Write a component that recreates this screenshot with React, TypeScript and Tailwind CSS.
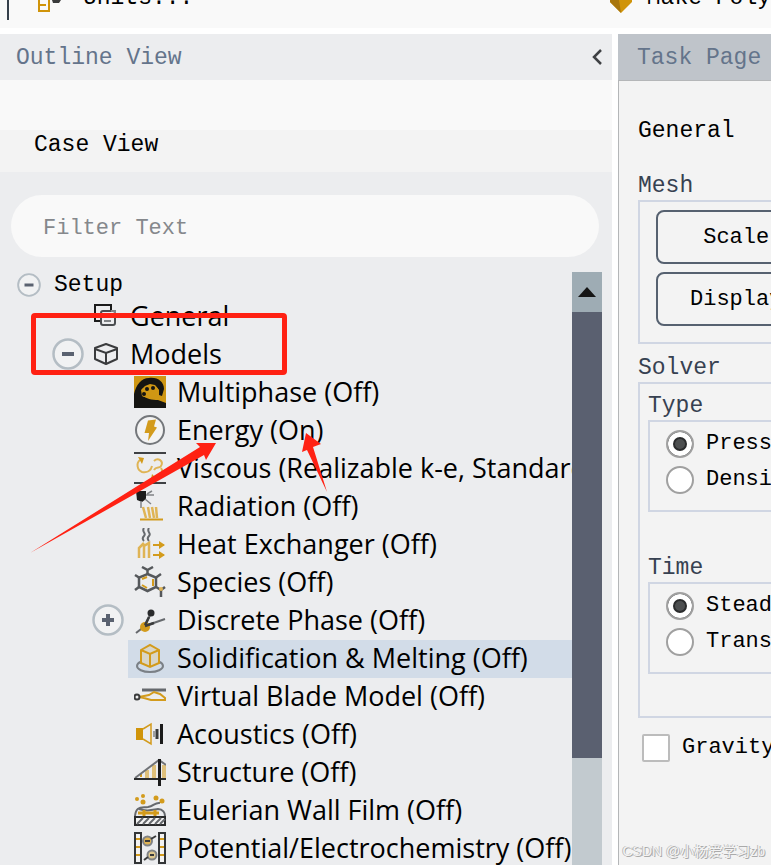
import { useState, type ReactNode } from 'react';

const GOLD = '#d39b1c';
const INK = '#1b1b1b';
const GRAY = '#66696d';

const MultiphaseIcon = () => (
  <svg viewBox="0 0 32 32" className="size-8 shrink-0" aria-hidden="true">
    <rect width="32" height="32" fill="#cf9714" />
    <path d="M0 32V18C2 9 7 2 15 2C24 1 30 6 30 13L28 20L25 19L25 15C23 9 18 8 14 10L8 13L8 19C12 23 18 24 24 24L32 27V32Z" fill="#151512" />
    <path d="M8 20L7 14L11 10L16 8L21 9L25 14L25 19L21 17L18 15L13 16L14 20L10 21Z" fill="#cf9714" />
    <g fill="#151512">
      <circle cx="13" cy="13" r="2" />
      <circle cx="19" cy="12" r="2" />
      <circle cx="10" cy="18" r="2" />
    </g>
  </svg>
);

const EnergyIcon = () => (
  <svg viewBox="0 0 32 32" className="size-8 shrink-0" aria-hidden="true">
    <circle cx="16" cy="16" r="14" fill="#f3f3f3" stroke="#74777b" strokeWidth="2" />
    <path d="M14 6.5L22 5.5L20 12.5L23 13.5L14 27L15 19H10.5Z" fill={GOLD} />
  </svg>
);

const ViscousIcon = () => (
  <svg viewBox="0 0 32 32" className="size-8 shrink-0" fill="none" aria-hidden="true">
    <path d="M0 1H32M0 31H32" stroke="#3f4144" strokeWidth="2" />
    <g stroke="#dfb455" strokeWidth="2">
      <path d="M6 8C2 11 3 18 8 20C13 21 17 19 18 14" />
      <path d="M20 9C24 5 30 9 27 14C26 17 22 14 20 18" />
      <path d="M27 16C31 22 24 26 18 25" />
    </g>
    <path d="M4 5L10 6L8 12ZM18 22L23 27H17Z" fill={GOLD} />
  </svg>
);

const RadiationIcon = () => (
  <svg viewBox="0 0 32 32" className="size-8 shrink-0" fill="none" aria-hidden="true">
    <path d="M2 1H12V9L8 12L3 10Z" fill={INK} />
    <path d="M12 5H20M11 9L17 14M7 11V18M13 4L18 1" stroke="#808386" strokeWidth="1.5" />
    <path d="M6 29.5H29" stroke={GOLD} strokeWidth="2" />
    <path d="M9 17L12 28M14 17L16 28M18 17L20 28M22 17L23 28" stroke="#dfb455" strokeWidth="2.5" />
  </svg>
);

const HeatIcon = () => (
  <svg viewBox="0 0 32 32" className="size-8 shrink-0" fill="none" aria-hidden="true">
    <path d="M10 0C7 4 13 5 10 8C8 10 9 12 10 13M15 0C12 4 18 5 15 8C13 10 14 12 15 13" stroke={GRAY} strokeWidth="2" />
    <path d="M5 30V20L10 15M10 30V18L15 15V30" stroke="#dfb455" strokeWidth="2.5" />
    <path d="M19 17H30M19 27H30" stroke={GOLD} strokeWidth="2" />
    <path d="M25 13L31 17L25 21ZM25 23L31 27L25 31Z" fill={GOLD} />
  </svg>
);

const SpeciesIcon = () => (
  <svg viewBox="0 0 32 32" className="size-8 shrink-0" fill="none" aria-hidden="true">
    <path d="M13.5 8L22 11.5V21L13.5 25L5 21V11.5Z" stroke="#55585b" strokeWidth="2.5" />
    <path d="M13.5 8V4L8 1M13.5 4L19 1M5 11.5L1 9M5 21L1 24M22 11.5L27 8M22 21L27 24V31M27 24L31 21" stroke="#55585b" strokeWidth="2.5" />
    <path d="M8 13L13 11M19 13V20M8 19L13 22" stroke={GOLD} strokeWidth="2" />
    <circle cx="27" cy="23" r="2" fill="#dfb455" />
  </svg>
);

const DiscreteIcon = () => (
  <svg viewBox="0 0 32 32" className="size-8 shrink-0" fill="none" aria-hidden="true">
    <path d="M2 29L11 22L31 15M11 22L17 9" stroke={GRAY} strokeWidth="2" />
    <circle cx="11" cy="23" r="5" fill={GOLD} />
    <circle cx="17" cy="9" r="3.5" fill="#2a2b2c" />
    <path d="M11 22L20 19M11 21L15 13" stroke="#3a3b3c" strokeWidth="2.5" />
  </svg>
);

const SolidificationIcon = () => (
  <svg viewBox="0 0 32 32" className="size-8 shrink-0" fill="none" aria-hidden="true">
    <ellipse cx="16" cy="24" rx="13" ry="6" stroke="#7b8086" strokeWidth="2" />
    <path d="M7 8L16 3L25 8V21L16 25L7 21Z" fill="#d9d6c8" stroke={GOLD} strokeWidth="2" />
    <path d="M7 8L16 12L25 8M16 12V25" stroke={GOLD} strokeWidth="2" />
  </svg>
);

const BladeIcon = () => (
  <svg viewBox="0 0 32 32" className="size-8 shrink-0" fill="none" aria-hidden="true">
    <path d="M8 10H32" stroke={GRAY} strokeWidth="3" />
    <path d="M5 17L15 15L20 12L26 14L31 18V20H17L10 18Z" stroke={GOLD} strokeWidth="2" />
    <circle cx="3" cy="17" r="2.5" stroke="#3a3b3c" strokeWidth="2" />
  </svg>
);

const AcousticsIcon = () => (
  <svg viewBox="0 0 32 32" className="size-8 shrink-0" fill="none" aria-hidden="true">
    <rect x="2" y="10" width="7" height="12" fill="#d0940a" />
    <path d="M9 11L17 6V26L9 21" stroke={GOLD} strokeWidth="1.5" />
    <path d="M20 13V19" stroke="#9c9ea1" strokeWidth="2" />
    <path d="M23 11V21" stroke="#3a3b3c" strokeWidth="3" />
    <path d="M27.5 6V26" stroke={INK} strokeWidth="3" />
  </svg>
);

const StructureIcon = () => (
  <svg viewBox="0 0 32 32" className="size-8 shrink-0" fill="none" aria-hidden="true">
    <path d="M13 22V14M20 22V9M30 22V9" stroke="#dfc07a" strokeWidth="4" />
    <path d="M7 21V18" stroke={GOLD} strokeWidth="2" />
    <path d="M1 22L25 4L32 9" stroke="#707377" strokeWidth="2" />
    <path d="M0 23H32" stroke="#2a2b2c" strokeWidth="2" />
    <path d="M25.5 3V30" stroke={INK} strokeWidth="3" />
  </svg>
);

const WallFilmIcon = () => (
  <svg viewBox="0 0 32 32" className="size-8 shrink-0" fill="none" aria-hidden="true">
    <rect x="1" y="23" width="30" height="8" fill="#f3f3f3" stroke="#2a2b2c" strokeWidth="2" />
    <path d="M3 30L9 24M9 30L15 24M15 30L21 24M21 30L27 24M26 30L31 25" stroke={GRAY} strokeWidth="2" />
    <path d="M1 22C2 12 7 14 14 13C20 12 21 8 26 9M5 15C13 18 18 16 24 15C29 15 31 19 31 22" stroke={GRAY} strokeWidth="2" />
    <path d="M4 19H25M10 16V22M21 16V22" stroke={GOLD} strokeWidth="3" />
    <g fill={GOLD}>
      <circle cx="3" cy="5" r="2" />
      <circle cx="9" cy="2" r="2" />
      <circle cx="9" cy="8" r="2.5" />
      <circle cx="22" cy="4" r="2.5" />
      <circle cx="28" cy="7" r="2.5" />
    </g>
  </svg>
);

const PotentialIcon = () => (
  <svg viewBox="0 0 32 32" className="size-8 shrink-0" fill="none" aria-hidden="true">
    <path d="M1 1H7V31H1ZM25 1H31V31H25Z" fill="#f3f3f3" stroke="#333537" strokeWidth="2" />
    <path d="M2 7H6M2 15H6M2 23H6M26 7H30M26 15H30M26 23H30" stroke={GOLD} strokeWidth="2" />
    <circle cx="13.5" cy="9" r="4.5" fill="#dfb455" stroke="#808386" strokeWidth="2" />
    <circle cx="18" cy="23" r="4.5" fill="#dfc88e" stroke="#808386" strokeWidth="2" />
    <path d="M17 7L22 4M14 25L10 28M11 9H16M16 23H20" stroke="#3a3b3c" strokeWidth="2" />
  </svg>
);

const GeneralIcon = () => (
  <svg viewBox="0 0 24 24" className="size-6 shrink-0" fill="none" aria-hidden="true">
    <path d="M7 17H1V1H17V6" stroke={INK} strokeWidth="2" />
    <rect x="7" y="7" width="14" height="14" rx="2" stroke="#4a4d50" strokeWidth="2" />
    <path d="M17 7L21 7V11M10 13H18M10 17H17" stroke="#808386" strokeWidth="2" />
  </svg>
);

const ModelsIcon = () => (
  <svg viewBox="0 0 24 24" className="size-6 shrink-0" fill="none" stroke="#3a3b3d" strokeWidth="2" aria-hidden="true">
    <path d="M12 2L23 6V17L12 22L1 17V6Z" strokeLinejoin="round" />
    <path d="M1 7L12 11L23 7M12 11V21" />
  </svg>
);

type ModelRow = {
  label: string;
  icon: ReactNode;
  expandable?: boolean;
};

const models: ModelRow[] = [
  { label: 'Multiphase (Off)', icon: <MultiphaseIcon /> },
  { label: 'Energy (On)', icon: <EnergyIcon /> },
  { label: 'Viscous (Realizable k-e, Standard Wall Fn)', icon: <ViscousIcon /> },
  { label: 'Radiation (Off)', icon: <RadiationIcon /> },
  { label: 'Heat Exchanger (Off)', icon: <HeatIcon /> },
  { label: 'Species (Off)', icon: <SpeciesIcon /> },
  { label: 'Discrete Phase (Off)', icon: <DiscreteIcon />, expandable: true },
  { label: 'Solidification & Melting (Off)', icon: <SolidificationIcon /> },
  { label: 'Virtual Blade Model (Off)', icon: <BladeIcon /> },
  { label: 'Acoustics (Off)', icon: <AcousticsIcon /> },
  { label: 'Structure (Off)', icon: <StructureIcon /> },
  { label: 'Eulerian Wall Film (Off)', icon: <WallFilmIcon /> },
  { label: 'Potential/Electrochemistry (Off)', icon: <PotentialIcon /> },
];

const Toggle = ({ label, open, small }: { label: string; open: boolean; small?: boolean }) => (
  <button type="button" aria-label={label} className={`shrink-0 ${small ? 'size-6' : 'size-8'}`}>
    <svg viewBox="0 0 32 32" className="size-full" fill="none">
      <circle cx="16" cy="16" r="14.5" fill="#f1f2f3" stroke="#b4bdc4" strokeWidth="2.5" />
      <path d={open ? 'M10 16H22' : 'M10 16H22M16 10V22'} stroke="#5a6270" strokeWidth="4" />
    </svg>
  </button>
);

const OutlineTree = () => {
  const [selected, setSelected] = useState('Solidification & Melting (Off)');

  return (
    <ul className="min-w-0 flex-1 overflow-hidden whitespace-nowrap font-['Open_Sans','Noto_Sans',sans-serif] text-[27px] leading-9 text-black">
      <li className="flex h-[26px] items-center gap-[13px] pl-[17px] font-['Liberation_Mono',monospace] text-[23px]">
        <Toggle label="Collapse Setup" open small />
        Setup
      </li>
      <li className="flex h-[38px] items-center gap-3 pb-0.5 pl-[94px]">
        <GeneralIcon />
        General
      </li>
      <li className="flex h-[38px] items-center gap-[10px] pb-0.5 pl-[52px]">
        <Toggle label="Collapse Models" open />
        <span className="flex items-center gap-3">
          <ModelsIcon />
          Models
        </span>
      </li>
      {models.map(({ label, icon, expandable }) => (
        <li key={label} className="flex h-[38px] gap-1 pl-[92px]">
          <span className="flex w-8 shrink-0 items-center pb-0.5">
            {expandable && <Toggle label={`Expand ${label}`} open={false} />}
          </span>
          <button
            type="button"
            onClick={() => setSelected(label)}
            className={`flex flex-1 items-center gap-[11px] pb-0.5 pl-[6px] text-left ${
              selected === label ? 'bg-[#d2dce8]' : ''
            }`}
          >
            {icon}
            {label}
          </button>
        </li>
      ))}
    </ul>
  );
};

const OutlinePanel = () => (
  <section className="flex min-h-0 min-w-0 flex-col bg-[#ecedef]">
    <header className="flex h-[46px] shrink-0 items-center justify-between pl-4 pr-[9px] text-[#64748b]">
      <h2 className="pt-0.5">Outline View</h2>
      <button type="button" aria-label="Collapse panel">
        <svg viewBox="0 0 14 20" className="h-5 w-[14px]" fill="none">
          <path d="M12 3L5 10L12 17" stroke="#3f4144" strokeWidth="2.5" />
        </svg>
      </button>
    </header>
    <div className="h-[50px] shrink-0 bg-[#f9f9f9]" />
    <h3 className="h-[42px] shrink-0 bg-[#f3f3f3] pl-[34px] leading-[30px] text-black">Case View</h3>
    <div className="shrink-0 pb-[15px] pl-[11px] pr-[13px] pt-[23px]">
      <input
        type="text"
        aria-label="Filter Text"
        placeholder="Filter Text"
        className="block h-[62px] w-full rounded-full bg-[#f9f9f9] px-8 pt-1 text-[22px] placeholder:text-[#85888c] focus:outline-none"
      />
    </div>
    <div className="flex min-h-0 flex-1 pr-[10px]">
      <OutlineTree />
      <div className="flex w-[30px] shrink-0 flex-col bg-[#c2cacf]">
        <button type="button" aria-label="Scroll up" className="flex h-10 shrink-0 items-center justify-center bg-[#9eacb4]">
          <svg viewBox="0 0 18 10" className="h-[10px] w-[18px]">
            <path d="M9 0L18 10H0Z" fill="#151515" />
          </svg>
        </button>
        <div className="h-[446px] shrink-0 bg-[#5a6070]" />
      </div>
    </div>
  </section>
);

const RadioGroup = ({ title, name, options }: { title: string; name: string; options: string[] }) => (
  <fieldset>
    <legend className="h-7 text-[23px] leading-7 text-[#374151]">{title}</legend>
    <div className="flex h-[92px] flex-col gap-2 border-2 border-[#d0d6e3] pl-4 pt-2">
      {options.map((option, i) => (
        <label key={option} className="flex items-center gap-3 whitespace-nowrap leading-7 text-black">
          <input
            type="radio"
            name={name}
            defaultChecked={i === 0}
            className="size-7 shrink-0 appearance-none rounded-full border-2 border-[#a0a0a0] bg-white checked:bg-[#4d4f50] checked:shadow-[inset_0_0_0_5px_#fff,inset_0_0_0_7px_#2b2c2d]"
          />
          {option}
        </label>
      ))}
    </div>
  </fieldset>
);

const TaskPanel = () => (
  <section className="flex min-h-0 min-w-0 flex-col overflow-hidden bg-[#f3f3f3] text-[22px]">
    <header className="flex h-[46px] shrink-0 items-center bg-[#bfc4ca] pl-[19px] text-[23px] text-[#64748b]">
      <h2 className="whitespace-nowrap pt-0.5">Task Page</h2>
    </header>
    <div className="flex-1 border-l border-t border-[#b4b6b8] pl-[19px]">
      <div className="min-w-[420px]">
        <h3 className="pt-8 text-[23px] leading-9 text-black">General</h3>
        <h4 className="mt-[23px] h-7 text-[23px] leading-7 text-[#374151]">Mesh</h4>
        <div className="flex h-[144px] flex-col gap-2 border-2 border-[#d0d6e3] pl-4 pt-2">
          <button type="button" className="h-[54px] w-[200px] rounded-lg border-2 border-[#566170] text-black">
            Scale...
          </button>
          <button type="button" className="h-[54px] w-[200px] rounded-lg border-2 border-[#566170] text-black">
            Display...
          </button>
        </div>
        <h4 className="mt-[10px] h-7 text-[23px] leading-7 text-[#374151]">Solver</h4>
        <div className="flex h-[336px] flex-col gap-[42px] border-2 border-[#d0d6e3] pl-2 pt-2">
          <RadioGroup title="Type" name="solver-type" options={['Pressure-Based', 'Density-Based']} />
          <RadioGroup title="Time" name="solver-time" options={['Steady', 'Transient']} />
        </div>
        <label className="mt-4 flex items-center gap-3 pl-1 leading-7 text-black">
          <input
            type="checkbox"
            className="size-7 shrink-0 appearance-none rounded-xs border-2 border-[#bcbcbc] bg-white checked:bg-[#4d4f50]"
          />
          Gravity
        </label>
      </div>
    </div>
  </section>
);

const Toolbar = () => (
  <div className="grid h-7 shrink-0 grid-cols-[minmax(0,4fr)_minmax(0,1fr)] overflow-hidden bg-[#f9f9f9] text-black">
    <div className="flex items-start pl-[7px]">
      <span className="h-5 w-[2px] bg-[#353f4b]" />
      <svg viewBox="0 0 26 14" className="ml-[28px] h-[14px] w-[26px]" fill="none" aria-hidden="true">
        <path d="M2 0V11H12V0M2 5H9" stroke="#d0940a" strokeWidth="2" />
        <path d="M15 0H24L22 3H16Z" fill="#3a3b3c" />
      </svg>
      <span className="-mt-4 ml-[20px] leading-7">Units...</span>
    </div>
    <div className="flex items-start">
      <svg viewBox="0 0 24 14" className="-ml-2 h-[14px] w-6 shrink-0" aria-hidden="true">
        <path d="M1 0H23V2L12 13L1 2Z" fill="#d0940a" />
        <path d="M1 0H10L12 13L1 2Z" fill="#a8750b" />
      </svg>
      <span className="-mt-4 ml-[14px] whitespace-nowrap leading-7">Make Polyhedra</span>
    </div>
  </div>
);

const Annotations = () => (
  <>
    <div className="pointer-events-none absolute left-[31px] top-[313px] h-[62px] w-[256px] rounded-sm border-[5px] border-[#ff2113]" />
    <svg viewBox="0 0 340 570" className="pointer-events-none absolute left-0 top-0 h-[570px] w-[340px]" fill="#ff2113" aria-hidden="true">
      <path d="M30 553L200 447L196 443L216 443L206 460L204 455Z" />
      <path d="M327 492L307 450L302 452L306 433L321 444L313 447Z" />
    </svg>
    <span className="pointer-events-none absolute bottom-1 right-[6px] whitespace-nowrap font-['Liberation_Sans','Noto_Sans_CJK_SC',sans-serif] text-[14px] leading-5 text-[#f3f3f3] [text-shadow:1px_1px_0_#aaa,-1px_0_0_#bbb]">
      CSDN @小杨爱学习zb
    </span>
  </>
);

const App = () => (
  <div className="relative flex h-screen flex-col overflow-hidden bg-white font-['Liberation_Mono',monospace] text-[23px]">
    <Toolbar />
    <main className="mt-[6px] grid min-h-0 flex-1 grid-cols-[minmax(0,4fr)_minmax(0,1fr)] grid-rows-[minmax(0,1fr)] gap-[6px]">
      <OutlinePanel />
      <TaskPanel />
    </main>
    <Annotations />
  </div>
);

export default App;
